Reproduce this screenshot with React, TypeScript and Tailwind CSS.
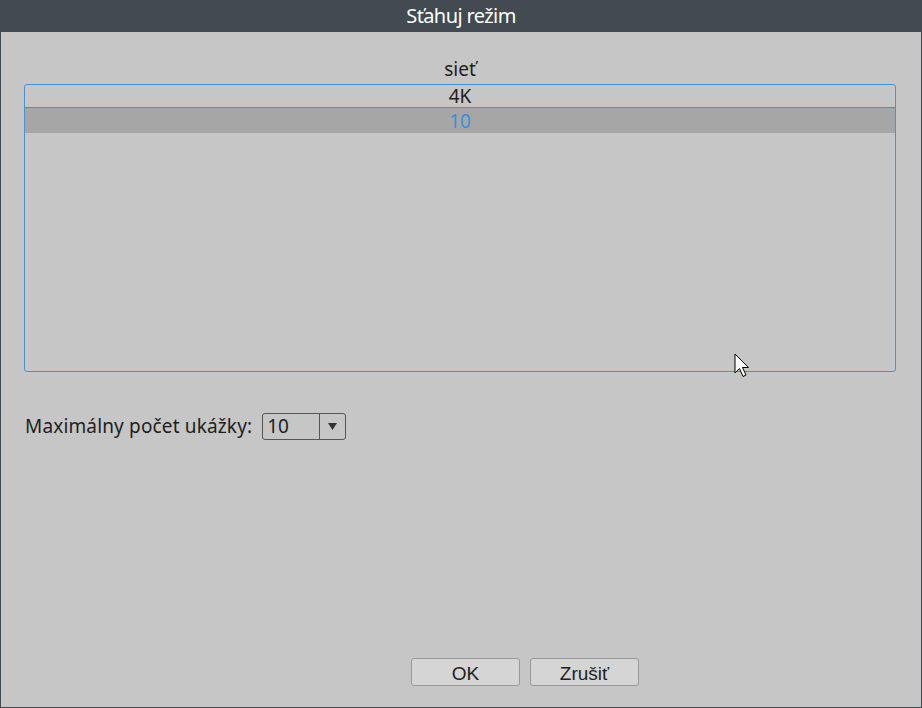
const font = { fontFamily: '"Noto Sans", "DejaVu Sans", sans-serif' };
const btnFont = { fontFamily: '"Liberation Sans", Arial, sans-serif' };

const Cursor = () => (
  <svg width="18" height="26" viewBox="0 0 18 26" className="absolute left-[734px] top-[353px]">
    <path d="M1 1 L1 20 L5.5 15.5 L9 23.5 L12 22 L8.5 14.5 L14.5 14.5 Z" fill="#fff" stroke="#000" strokeWidth="1" />
  </svg>
);

export default function App() {
  return (
    <div className="relative w-[922px] h-[708px] flex flex-col bg-[#c6c6c6]" style={font}>
      <div className="h-8 bg-[#434a52] flex items-center justify-center text-white text-[20px] tracking-[-0.6px]">
        Sťahuj režim
      </div>
      <div className="flex-1 flex flex-col border-x border-b border-[#434a52] pl-[23px] pr-[25px]">
        <div className="h-[52px] flex items-end justify-center pb-[1px] text-[19px] text-[#1e1e1e]">sieť</div>
        <div className="h-[288px] border border-[#4a90d9] rounded-[3px] flex flex-col">
          <div className="h-[23px] pt-[1px] flex items-center justify-center text-[19px] text-[#1e1e1e] border-b border-[#4a90d9]">4K</div>
          <div className="h-[25px] pt-[2px] flex items-center justify-center text-[19px] text-[#3a8fdc] bg-[#a6a6a6]">10</div>
        </div>
        <div className="mt-[40px] flex items-center gap-[10px] pl-[1px]">
          <span className="text-[19px] tracking-[0.15px] text-[#1e1e1e]">Maximálny počet ukážky:</span>
          <div className="w-[84px] h-[27px] border border-[#555] rounded-[3px] flex">
            <div className="flex-1 flex items-center pl-[4px] text-[19px] text-[#1e1e1e]">10</div>
            <div className="w-[26px] border-l border-[#555] flex items-center justify-center">
              <svg width="9" height="7" viewBox="0 0 9 7"><path d="M0 0 H9 L4.5 7 Z" fill="#333" /></svg>
            </div>
          </div>
        </div>
        <div className="flex-1" />
        <div className="flex justify-center gap-[10px] pb-[21px] pl-[130px]">
          <button className="w-[109px] h-[28px] pt-[1px] bg-[#d5d5d5] border border-[#999] rounded-[3px] text-[19px] text-[#222]" style={btnFont}>OK</button>
          <button className="w-[109px] h-[28px] pt-[1px] bg-[#d5d5d5] border border-[#999] rounded-[3px] text-[19px] text-[#222]" style={btnFont}>Zrušiť</button>
        </div>
      </div>
      <Cursor />
    </div>
  );
}
